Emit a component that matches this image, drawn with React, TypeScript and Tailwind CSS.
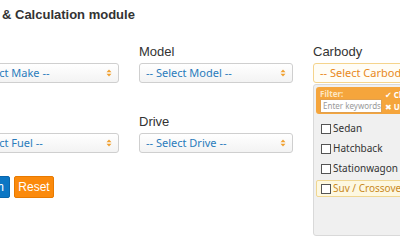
const selFont = { fontFamily: "'Noto Sans', 'DejaVu Sans', sans-serif" }

const selectBox =
  'h-[20px] flex items-center justify-between px-[6px] rounded-[3px] border border-[#cfcfcf] bg-gradient-to-b from-white to-[#f3f3f3] text-[11px] text-[#2a7cbc]'

function Arrows({ color }: { color: string }) {
  return (
    <svg width="6" height="8" viewBox="0 0 6 8" className="shrink-0">
      <path d="M3 0.5 L5.5 3.2 H0.5 Z" fill={color} />
      <path d="M3 7.5 L5.5 4.8 H0.5 Z" fill={color} />
    </svg>
  )
}

function Field({ label, placeholder }: { label: string; placeholder: string }) {
  return (
    <div className="flex flex-col">
      <label className="text-[13px] leading-[16px] text-[#333] mb-[3px]">{label}</label>
      <div className={selectBox} style={selFont}>
        <span className="whitespace-nowrap">{placeholder}</span>
        <Arrows color="#f0a030" />
      </div>
    </div>
  )
}

const options = ['Sedan', 'Hatchback', 'Stationwagon']

export default function App() {
  return (
    <div className="w-[400px] h-[240px] overflow-hidden bg-white relative font-['Liberation_Sans',sans-serif]">
      <h1 className="pl-[2px] pt-[7px] text-[13px] leading-[16px] font-bold text-[#333]">
        &amp; Calculation module
      </h1>

      <div className="ml-[-39px] mt-[21px] grid grid-cols-[158px_154px_154px] gap-x-[20px] gap-y-[31px] w-[500px]">
        <Field label="Make" placeholder="-- Select Make --" />
        <Field label="Model" placeholder="-- Select Model --" />

        {/* Carbody with open dropdown */}
        <div className="flex flex-col relative">
          <label className="text-[13px] leading-[16px] text-[#333] mb-[3px]">Carbody</label>
          <div
            className="h-[20px] flex items-center px-[6px] rounded-[3px] border border-[#f5d48c] bg-[#fffdf6] text-[11px] text-[#e8891c]"
            style={selFont}
          >
            <span className="whitespace-nowrap">-- Select Carbody --</span>
          </div>
          <div
            className="absolute left-0 top-[40px] w-[154px] h-[152px] rounded-[3px] border border-[#d9d9d9] bg-[#f0f0f0] p-[2px]"
            style={selFont}
          >
            <div className="rounded-[3px] bg-[#f5a53c] h-[27px] flex px-[4px] pt-[2px]">
              <div className="flex flex-col">
                <span className="text-[8px] leading-[9px] font-bold text-[#fde7c3]">Filter:</span>
                <div className="mt-[1px] w-[62px] h-[14px] bg-white border border-[#e0a050] flex items-center px-[2px] text-[8px] text-[#999] whitespace-nowrap overflow-hidden">
                  Enter keywords
                </div>
              </div>
              <div className="ml-[3px] flex flex-col text-[8px] leading-[12px] font-bold text-white">
                <span className="whitespace-nowrap">✔ Check all</span>
                <span className="whitespace-nowrap">✖ Uncheck all</span>
              </div>
            </div>
            <ul className="mt-[6px] flex flex-col gap-[3px] text-[10px] text-[#333]">
              {options.map((o) => (
                <li key={o} className="h-[17px] flex items-center gap-[2px] pl-[4px] border border-transparent">
                  <span className="w-[10px] h-[10px] border border-[#555] bg-white shrink-0" />
                  <span>{o}</span>
                </li>
              ))}
              <li className="h-[17px] flex items-center gap-[2px] pl-[4px] rounded-[2px] border border-[#f0d690] bg-[#fdf8e1] text-[#c8891e]">
                <span className="w-[10px] h-[10px] border border-[#555] bg-white shrink-0" />
                <span>Suv / Crossover</span>
              </li>
            </ul>
          </div>
        </div>

        <Field label="Fuel" placeholder="-- Select Fuel --" />
        <Field label="Drive" placeholder="-- Select Drive --" />
      </div>

      <div className="ml-[-40px] mt-[23px] flex gap-[4px] text-[12px] text-white">
        <button className="h-[22px] w-[50px] bg-[#0b76c4] border border-[#0a66ab] rounded-[2px]">Search</button>
        <button className="h-[22px] w-[40px] bg-[#fb8a0c] border border-[#e87a00] rounded-[2px]">Reset</button>
      </div>
    </div>
  )
}
